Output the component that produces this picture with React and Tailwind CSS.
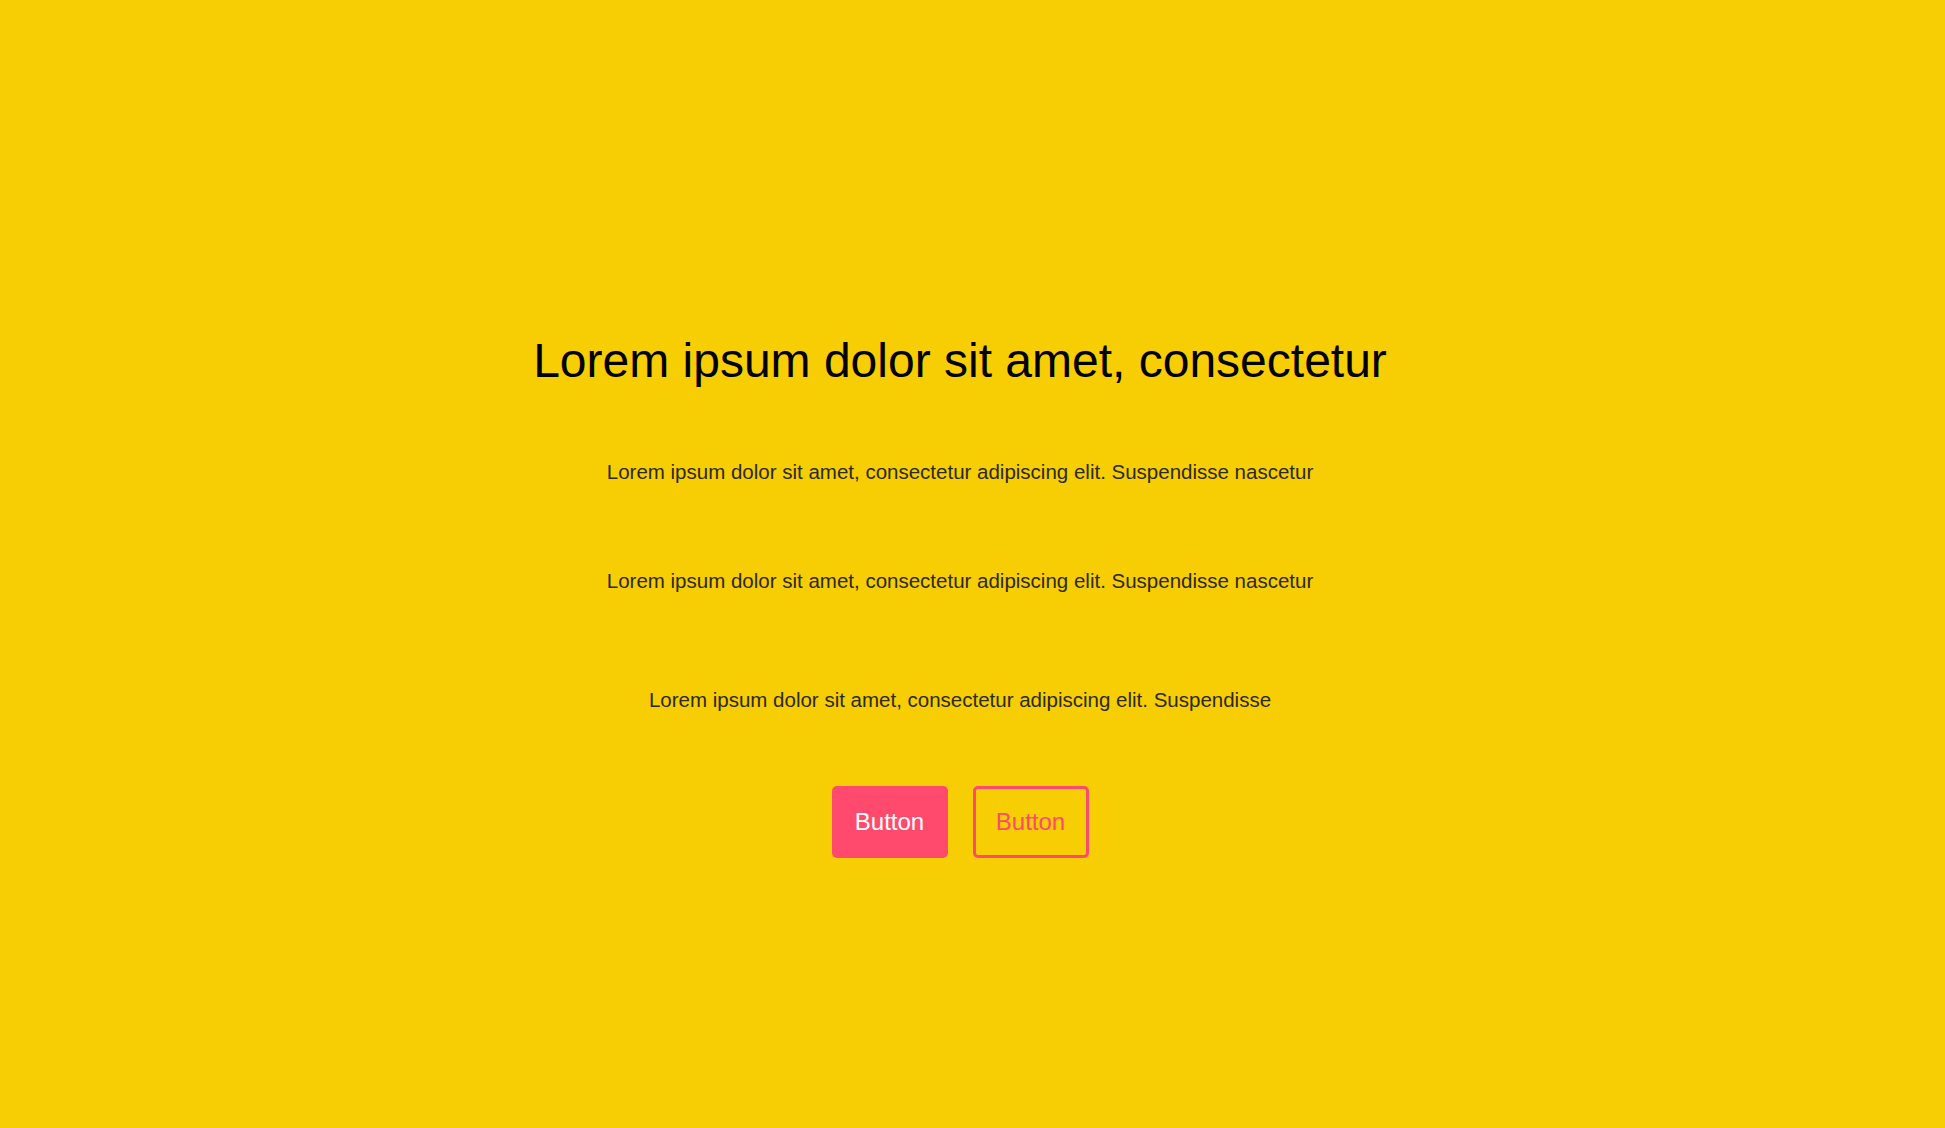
import React from 'react';

const Hero = () => {
  const lines = [
    'Lorem ipsum dolor sit amet, consectetur adipiscing elit. Suspendisse nascetur',
    'Lorem ipsum dolor sit amet, consectetur adipiscing elit. Suspendisse nascetur',
  ];

  return (
    <div className="min-h-screen w-full bg-[#F7CD03] flex flex-col items-center pt-[337px] pr-[25px] font-['Liberation_Sans',sans-serif]">
      <h1 className="text-[48px] leading-[48px] text-black">Lorem ipsum dolor sit amet, consectetur</h1>

      <p className="mt-[73px] text-[20.5px] leading-[28px] text-[#2d2a1f]">{lines[0]}</p>
      <p className="mt-[81px] text-[20.5px] leading-[28px] text-[#2d2a1f]">{lines[1]}</p>
      <p className="mt-[91px] text-[20.5px] leading-[28px] text-[#2d2a1f]">
        Lorem ipsum dolor sit amet, consectetur adipiscing elit. Suspendisse
      </p>

      <div className="mt-[72px] flex gap-[25px]">
        <button className="w-[116px] h-[72px] rounded-[5px] bg-[#FF4A6D] text-white text-[24px]">Button</button>
        <button className="w-[116px] h-[72px] rounded-[5px] border-[3px] border-[#FF4A6D] text-[#FF4A6D] text-[24px]">Button</button>
      </div>
    </div>
  );
};

export default function App() {
  return <Hero />;
}
